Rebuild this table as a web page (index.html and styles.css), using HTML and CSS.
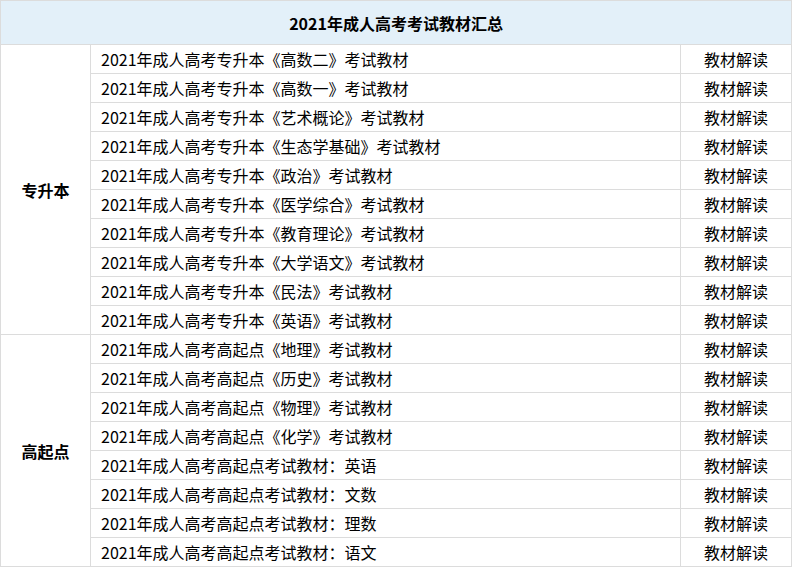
FILE: index.html
```html
<!DOCTYPE html>
<html lang="zh-CN">
<head>
<meta charset="utf-8">
<title>2021年成人高考考试教材汇总</title>
<link rel="stylesheet" href="styles.css">
</head>
<body>
<table class="books">
  <colgroup>
    <col class="col-cat">
    <col class="col-name">
    <col class="col-link">
  </colgroup>
  <thead>
    <tr><th colspan="3" class="title">2021年成人高考考试教材汇总</th></tr>
  </thead>
  <tbody>
    <tr><td class="cat" rowspan="10">专升本</td><td class="name">2021年成人高考专升本《高数二》考试教材</td><td class="link">教材解读</td></tr>
    <tr><td class="name">2021年成人高考专升本《高数一》考试教材</td><td class="link">教材解读</td></tr>
    <tr><td class="name">2021年成人高考专升本《艺术概论》考试教材</td><td class="link">教材解读</td></tr>
    <tr><td class="name">2021年成人高考专升本《生态学基础》考试教材</td><td class="link">教材解读</td></tr>
    <tr><td class="name">2021年成人高考专升本《政治》考试教材</td><td class="link">教材解读</td></tr>
    <tr><td class="name">2021年成人高考专升本《医学综合》考试教材</td><td class="link">教材解读</td></tr>
    <tr><td class="name">2021年成人高考专升本《教育理论》考试教材</td><td class="link">教材解读</td></tr>
    <tr><td class="name">2021年成人高考专升本《大学语文》考试教材</td><td class="link">教材解读</td></tr>
    <tr><td class="name">2021年成人高考专升本《民法》考试教材</td><td class="link">教材解读</td></tr>
    <tr><td class="name">2021年成人高考专升本《英语》考试教材</td><td class="link">教材解读</td></tr>
    <tr><td class="cat" rowspan="8">高起点</td><td class="name">2021年成人高考高起点《地理》考试教材</td><td class="link">教材解读</td></tr>
    <tr><td class="name">2021年成人高考高起点《历史》考试教材</td><td class="link">教材解读</td></tr>
    <tr><td class="name">2021年成人高考高起点《物理》考试教材</td><td class="link">教材解读</td></tr>
    <tr><td class="name">2021年成人高考高起点《化学》考试教材</td><td class="link">教材解读</td></tr>
    <tr><td class="name">2021年成人高考高起点考试教材：英语</td><td class="link">教材解读</td></tr>
    <tr><td class="name">2021年成人高考高起点考试教材：文数</td><td class="link">教材解读</td></tr>
    <tr><td class="name">2021年成人高考高起点考试教材：理数</td><td class="link">教材解读</td></tr>
    <tr><td class="name">2021年成人高考高起点考试教材：语文</td><td class="link">教材解读</td></tr>
  </tbody>
</table>
</body>
</html>
```
FILE: styles.css
```css
html, body {
  margin: 0;
  padding: 0;
  background: #fff;
}
body {
  font-family: "Microsoft YaHei", "Noto Sans CJK SC", sans-serif;
  color: #000;
}
.books {
  border-collapse: collapse;
  width: 791px;
  table-layout: fixed;
  font-size: 16px;
}
.col-cat { width: 90px; }
.col-name { width: 590px; }
.col-link { width: 111px; }
.books th,
.books td {
  border: 1px solid #dcdcdc;
  padding: 0;
  line-height: 20px;
  white-space: nowrap;
}
.title {
  height: 43px;
  background: #e3f0f9;
  font-size: 16px;
  font-weight: bold;
  text-align: center;
}
.cat {
  font-weight: bold;
  text-align: center;
  vertical-align: middle;
}
.books .name {
  height: 28px;
  padding-left: 10px;
  text-align: left;
}
.link {
  text-align: center;
}
```
